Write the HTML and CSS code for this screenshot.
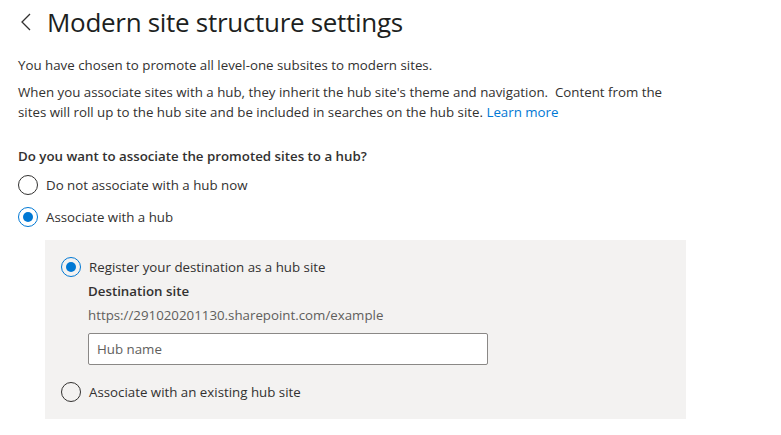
FILE: index.html
```html
<!DOCTYPE html>
<html lang="en">
<head>
  <meta charset="UTF-8">
  <meta name="viewport" content="width=device-width, initial-scale=1.0">
  <title>Modern site structure settings</title>
  <link rel="stylesheet" href="styles.css">
</head>
<body>
  <div class="page">
    <div class="header">
      <span class="back">
        <svg width="12" height="18" viewBox="0 0 12 18"><path d="M10 1 L2 9 L10 17" fill="none" stroke="#323130" stroke-width="1.3"/></svg>
      </span>
      <h1>Modern site structure settings</h1>
    </div>

    <p class="intro">You have chosen to promote all level-one subsites to modern sites.</p>
    <p class="desc">When you associate sites with a hub, they inherit the hub site's theme and navigation.&nbsp; Content from the<br>sites will roll up to the hub site and be included in searches on the hub site. <a href="#">Learn more</a></p>

    <div class="question">Do you want to associate the promoted sites to a hub?</div>
    <div class="options">
      <label class="option"><span class="radio"></span>Do not associate with a hub now</label>
      <label class="option"><span class="radio checked"></span>Associate with a hub</label>
    </div>

    <div class="panel">
      <label class="option"><span class="radio checked"></span>Register your destination as a hub site</label>
      <div class="sub">
        <div class="sub-label">Destination site</div>
        <div class="url">https://291020201130.sharepoint.com/example</div>
        <div class="field"><input type="text" placeholder="Hub name"></div>
      </div>
      <label class="option"><span class="radio"></span>Associate with an existing hub site</label>
    </div>
  </div>
</body>
</html>
```

FILE: styles.css
```css
body {
  margin: 0;
  padding: 0;
  background-color: #fff;
  font-family: "Open Sans", "Noto Sans", sans-serif;
  color: #323130;
}
.page {
  padding: 0 18px;
}
.header {
  display: flex;
  align-items: center;
  height: 44px;
}
.back {
  display: flex;
  width: 27px;
  padding-left: 2px;
}
h1 {
  margin: 0;
  font-size: 26px;
  font-weight: 400;
  letter-spacing: -0.3px;
  color: #201f1e;
}
.intro {
  margin: 11px 0 0;
  font-size: 13.3px;
  line-height: 20px;
}
.desc {
  margin: 7px 0 0;
  font-size: 13.3px;
  line-height: 20px;
}
.desc a {
  color: #0078d4;
  text-decoration: none;
}
.question {
  margin-top: 24px;
  font-size: 13.3px;
  font-weight: 600;
  line-height: 20px;
}
.options {
  margin-top: 9px;
  display: flex;
  flex-direction: column;
  gap: 12px;
}
.option {
  display: flex;
  align-items: center;
  gap: 8px;
  font-size: 13.3px;
  line-height: 20px;
}
.radio {
  box-sizing: border-box;
  width: 20px;
  height: 20px;
  border: 1px solid #323130;
  border-radius: 50%;
  flex: none;
  position: relative;
}
.radio.checked {
  border-color: #0078d4;
}
.radio.checked::after {
  content: "";
  position: absolute;
  left: 4px;
  top: 4px;
  width: 10px;
  height: 10px;
  border-radius: 50%;
  background-color: #0078d4;
}
.panel {
  margin: 13px 0 0 27px;
  width: 641px;
  box-sizing: border-box;
  padding: 17px 16px 17px;
  background-color: #f3f2f1;
}
.sub {
  padding-left: 27px;
  margin-top: 4px;
}
.sub-label {
  font-size: 13.3px;
  font-weight: 600;
  line-height: 20px;
}
.url {
  margin-top: 4px;
  font-size: 13.3px;
  line-height: 20px;
  color: #605e5c;
}
.field {
  margin-top: 8px;
  margin-bottom: 17px;
}
.field input {
  box-sizing: border-box;
  width: 400px;
  height: 32px;
  border: 1px solid #8a8886;
  border-radius: 2px;
  padding: 0 8px;
  font-family: inherit;
  font-size: 13.3px;
  color: #323130;
  background: #fff;
}
.field input::placeholder {
  color: #605e5c;
}
```
